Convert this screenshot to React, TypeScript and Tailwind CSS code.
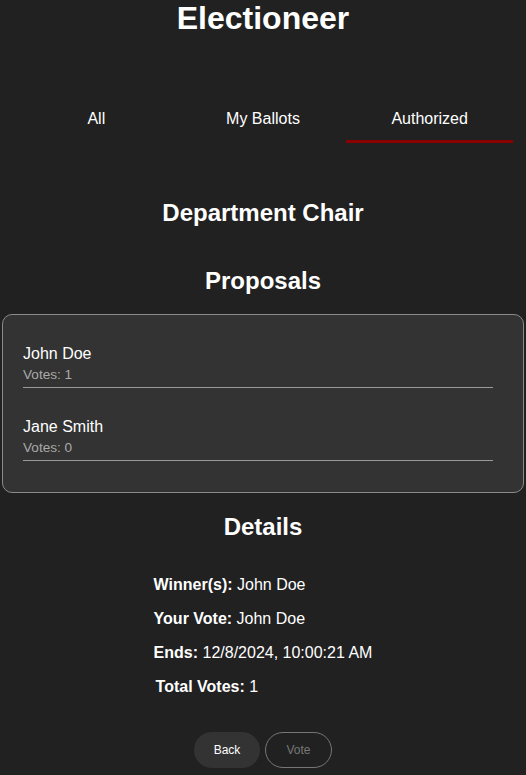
export default function App() {
  const proposals = [
    { name: "John Doe", votes: 1 },
    { name: "Jane Smith", votes: 0 },
  ];

  return (
    <div className="min-h-screen bg-[#212121] text-white font-['Liberation_Sans',Arial,sans-serif]">
      <h1 className="text-center text-[32px] font-bold leading-[37px]">Electioneer</h1>

      <nav className="mt-[63px] px-[13px] grid grid-cols-3 text-center text-base">
        <div className="h-[43px] pt-[7px]">All</div>
        <div className="h-[43px] pt-[7px]">My Ballots</div>
        <div className="h-[43px] pt-[7px] border-b-[3px] border-[#8b0000]">Authorized</div>
      </nav>

      <h2 className="mt-[56px] text-center text-2xl font-bold leading-7">Department Chair</h2>
      <h2 className="mt-[40px] text-center text-2xl font-bold leading-7">Proposals</h2>

      <div className="mx-[2px] mt-[19px] rounded-[10px] border border-[#8a8a8a] bg-[#333333] pl-5 pr-[30px] pt-[29px] pb-[31px]">
        {proposals.map((p, i) => (
          <div key={p.name} className={`border-b border-[#9a9a9a] pb-[2px] ${i > 0 ? "mt-[29px]" : ""}`}>
            <div className="text-base leading-5">{p.name}</div>
            <div className="text-[13.6px] leading-5 text-[#aaaaaa] mt-[1px]">Votes: {p.votes}</div>
          </div>
        ))}
      </div>

      <h2 className="mt-[20px] text-center text-2xl font-bold leading-7">Details</h2>

      <div className="flex justify-center mt-[34px]">
        <div className="text-base leading-5 flex flex-col gap-[14px]">
          <div><span className="font-bold">Winner(s):</span> John Doe</div>
          <div><span className="font-bold">Your Vote:</span> John Doe</div>
          <div><span className="font-bold">Ends:</span> 12/8/2024, 10:00:21 AM</div>
          <div className="pl-[2px]"><span className="font-bold">Total Votes:</span> 1</div>
        </div>
      </div>

      <div className="mt-[35px] flex justify-center gap-[5px] pb-2">
        <button className="h-9 w-[66px] rounded-full bg-[#333333] text-xs text-white">Back</button>
        <button className="h-9 w-[67px] rounded-full border border-[#777777] text-xs text-[#777777]">Vote</button>
      </div>
    </div>
  );
}
